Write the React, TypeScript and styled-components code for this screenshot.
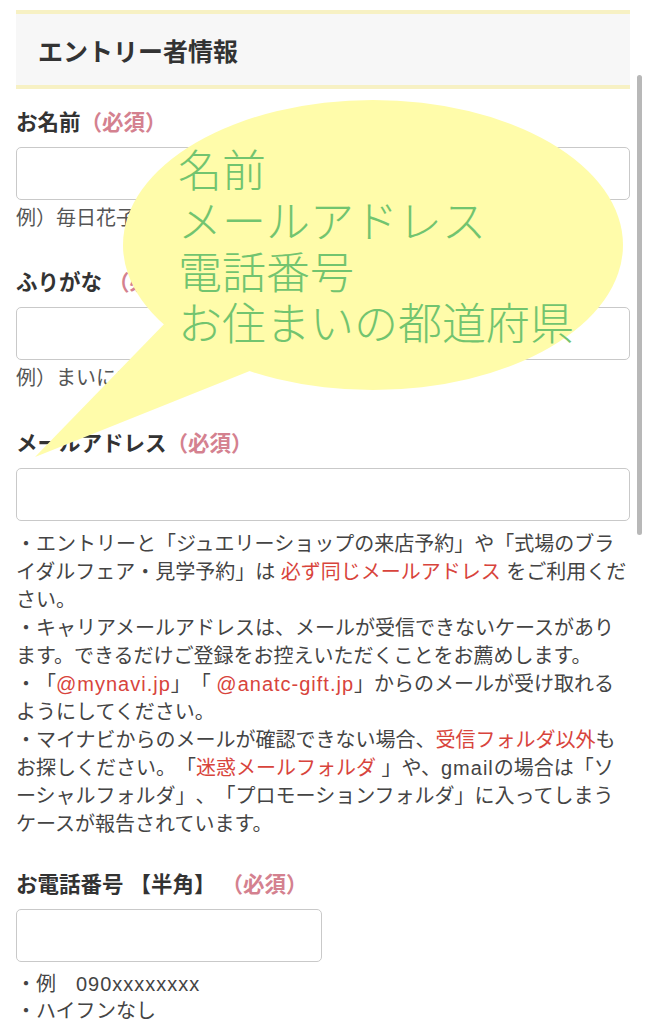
import styled, { createGlobalStyle } from "styled-components";

const GlobalStyle = createGlobalStyle`
  html, body {
    margin: 0;
    padding: 0;
    background: #fff;
  }
  body {
    font-family: "Liberation Sans", "Noto Sans CJK JP", sans-serif;
    color: #333;
    text-spacing-trim: space-all;
  }
  * {
    box-sizing: border-box;
  }
`;

const Page = styled.div`
  position: relative;
  width: 646px;
  height: 1024px;
  overflow: hidden;
  padding: 10px 16px 0;
`;

const SectionHeader = styled.div`
  height: 79px;
  border-top: 4px solid #f7f1c4;
  border-bottom: 4px solid #f7f1c4;
  background: #f7f7f7;
  display: flex;
  align-items: center;
  padding-left: 22px;
  font-size: 25px;
  font-weight: 700;
  color: #333;
`;

const Field = styled.div<{ $gap: number }>`
  margin-top: ${(p) => p.$gap}px;
`;

const Label = styled.div`
  font-size: 21.5px;
  font-weight: 700;
  line-height: 30px;
  color: #333;
  margin-bottom: 9px;
`;

const Required = styled.span`
  color: #d4818f;
`;

const TextInput = styled.input<{ $width?: number }>`
  display: block;
  width: ${(p) => (p.$width ? `${p.$width}px` : "100%")};
  height: 53px;
  margin: 0;
  border: 1px solid #c9c9c9;
  border-radius: 5px;
  background: #fff;
`;

const Hint = styled.div`
  margin-top: 4px;
  font-size: 20px;
  line-height: 28px;
  color: #555;
`;

const Notes = styled.div<{ $lh: number }>`
  margin-top: 9px;
  font-size: 20px;
  line-height: ${(p) => p.$lh}px;
  line-break: loose;
  color: #444;
`;

const NoteItem = styled.p`
  margin: 0;
`;

const Em = styled.span`
  color: #d8443c;
`;

// latin runs look wider in the original (Hiragino), so open them up a little
const Latin = styled.span`
  letter-spacing: 1px;
`;

const ScrollThumb = styled.div`
  position: absolute;
  top: 75px;
  left: 637px;
  width: 5px;
  height: 460px;
  border-radius: 3px;
  background: #b8b8b8;
`;

const Callout = styled.div`
  position: absolute;
  left: 0;
  top: 0;
  width: 646px;
  height: 470px;
  padding: 143px 0 0 178px;
  pointer-events: none;
`;

const CalloutShape = styled.svg`
  position: absolute;
  left: 0;
  top: 0;
`;

const CalloutText = styled.div`
  position: relative;
  font-family: "Noto Sans CJK JP", sans-serif;
  font-size: 44px;
  font-weight: 300;
  line-height: 51px;
  color: #72c46f;
  white-space: nowrap;
`;

const App = () => {
  return (
    <>
      <GlobalStyle />
      <Page>
        <SectionHeader>エントリー者情報</SectionHeader>

        <Field $gap={19}>
          <Label>
            お名前<Required>（必須）</Required>
          </Label>
          <TextInput type="text" />
          <Hint>例）毎日花子</Hint>
        </Field>

        <Field $gap={36}>
          <Label>
            ふりがな <Required>（必須）</Required>
          </Label>
          <TextInput type="text" />
          <Hint>例）まいにちはなこ</Hint>
        </Field>

        <Field $gap={37}>
          <Label>
            メールアドレス<Required>（必須）</Required>
          </Label>
          <TextInput type="email" />
          <Notes $lh={28}>
            <NoteItem>
              ・エントリーと「ジュエリーショップの来店予約」や「式場のブライダルフェア・見学予約」は{" "}
              <Em>必ず同じメールアドレス</Em> をご利用ください。
            </NoteItem>
            <NoteItem>
              ・キャリアメールアドレスは、メールが受信できないケースがあります。できるだけご登録をお控えいただくことをお薦めします。
            </NoteItem>
            <NoteItem>
              ・「<Em><Latin>@mynavi.jp</Latin></Em>」「 <Em><Latin>@anatc-gift.jp</Latin></Em>」からのメールが受け取れるようにしてください。
            </NoteItem>
            <NoteItem>
              ・マイナビからのメールが確認できない場合、<Em>受信フォルダ以外</Em>
              もお探しください。「<Em>迷惑メールフォルダ</Em> 」や、<Latin>gmail</Latin>の場合は「ソーシャルフォルダ」、「プロモーションフォルダ」に入ってしまうケースが報告されています。
            </NoteItem>
          </Notes>
        </Field>

        <Field $gap={32}>
          <Label>
            お電話番号 【半角】 <Required>（必須）</Required>
          </Label>
          <TextInput type="tel" $width={306} />
          <Notes $lh={27}>
            <NoteItem>
              ・例　<Latin>090xxxxxxxx</Latin>
            </NoteItem>
            <NoteItem>・ハイフンなし</NoteItem>
          </Notes>
        </Field>

        <ScrollThumb />

        <Callout>
          <CalloutShape width="646" height="470" viewBox="0 0 646 470">
            <ellipse cx="373" cy="245" rx="250" ry="145" fill="#fffcaa" />
            <polygon points="170,318 35,457 262,366" fill="#fffcaa" />
          </CalloutShape>
          <CalloutText>
            名前
            <br />
            メールアドレス
            <br />
            電話番号
            <br />
            お住まいの都道府県
          </CalloutText>
        </Callout>
      </Page>
    </>
  );
};

export default App;
